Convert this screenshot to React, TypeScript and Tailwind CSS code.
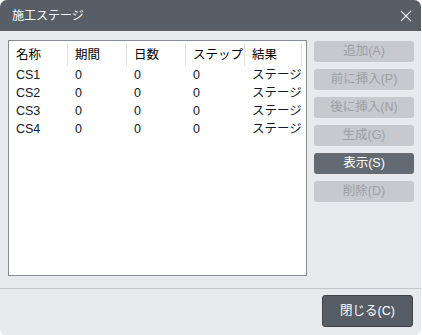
const cols = ['名称', '期間', '日数', 'ステップ', '結果'];
const rows = [
  ['CS1', '0', '0', '0', 'ステージ'],
  ['CS2', '0', '0', '0', 'ステージ'],
  ['CS3', '0', '0', '0', 'ステージ'],
  ['CS4', '0', '0', '0', 'ステージ'],
];

const buttons = [
  { label: '追加(A)', active: false },
  { label: '前に挿入(P)', active: false },
  { label: '後に挿入(N)', active: false },
  { label: '生成(G)', active: false },
  { label: '表示(S)', active: true },
  { label: '削除(D)', active: false },
];

export default function App() {
  return (
    <div className="h-[335px] w-[422px] bg-white font-['Liberation_Sans','Noto_Sans_CJK_JP',sans-serif]">
      <div className="flex h-full w-[421px] flex-col overflow-hidden rounded-t-[7px] rounded-b-[6px] bg-[#e8e9ec]">
        <div className="flex h-[31px] shrink-0 items-center justify-between bg-[#585e66] pl-[12px] pr-[9px]">
          <span className="text-[12px] text-white">施工ステージ</span>
          <svg width="12" height="12" viewBox="0 0 12 12" className="text-[#e6e7ea]">
            <path d="M1 1 L11 11 M11 1 L1 11" stroke="currentColor" strokeWidth="1.2" />
          </svg>
        </div>
        <div className="flex flex-1 gap-[7px] pl-[8px] pt-[9px]">
          <div className="h-[236px] w-[299px] border border-[#868a91] bg-white">
            <div className="flex h-[25px] pt-[2px]">
              {cols.map((c, i) => (
                <div
                  key={c}
                  className={`flex h-[23px] items-center overflow-hidden whitespace-nowrap border-r border-[#e1e2e4] pl-[7px] pt-[2px] text-[12.5px] text-black ${
                    i === 4 ? 'w-[57px]' : 'w-[59px]'
                  }`}
                >
                  {c}
                </div>
              ))}
            </div>
            {rows.map((r) => (
              <div key={r[0]} className="flex h-[18px] items-center">
                {r.map((v, i) => (
                  <div key={i} className="w-[59px] whitespace-nowrap pl-[7px] text-[12.5px] leading-none text-[#101828]">
                    {v}
                  </div>
                ))}
              </div>
            ))}
          </div>
          <div className="flex flex-col gap-[7px] pt-[1px]">
            {buttons.map((b) => (
              <div
                key={b.label}
                className={`flex h-[21px] w-[100px] items-center justify-center whitespace-nowrap rounded-[3px] text-[12.5px] ${
                  b.active ? 'bg-[#646a72] text-white' : 'bg-[#c6c9ce] text-[#9b9fa6]'
                }`}
              >
                {b.label}
              </div>
            ))}
          </div>
        </div>
        <div className="flex h-[47px] shrink-0 justify-end border-t border-[#c4c6ca] pr-[8px] pt-[6px]">
          <div className="flex h-[32px] w-[91px] items-center justify-center rounded-[3px] border border-[#3f444b] bg-[#575d65] text-[12.5px] text-white">
            閉じる(C)
          </div>
        </div>
      </div>
    </div>
  );
}
